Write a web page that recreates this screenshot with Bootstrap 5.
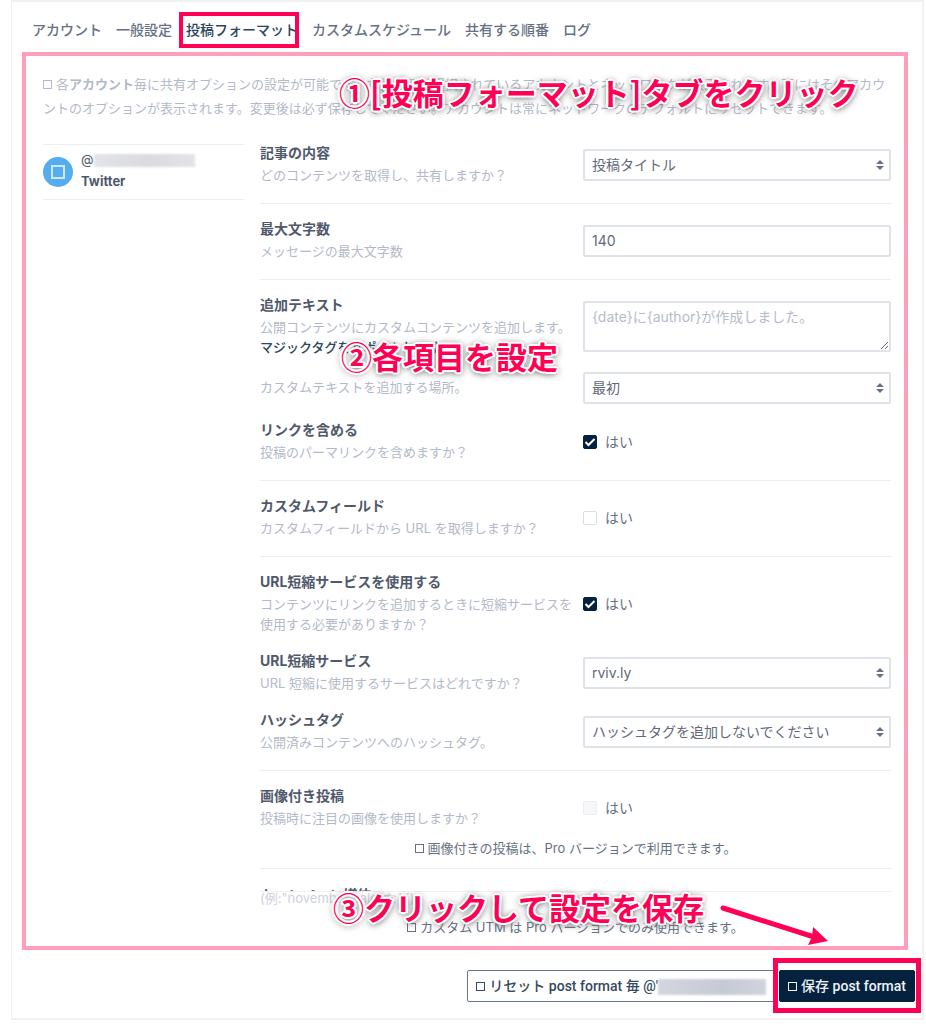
<!DOCTYPE html>
<html lang="ja">
<head>
<meta charset="utf-8">
<meta name="viewport" content="width=device-width, initial-scale=1">
<title>投稿フォーマット</title>
<link href="https://cdn.jsdelivr.net/npm/bootstrap@5.3.0/dist/css/bootstrap.min.css" rel="stylesheet">
<style>
:root{--ink:#50596c;--soft:#b3b9c9;--rule:#f0f1f3;--edge:#dfe2e9;--navy:#04213d;--pink:#ff0055}
body{font-family:Inter,"Noto Sans CJK JP",sans-serif;font-size:14px;line-height:20px;color:#667083;background:#fff}
.panel{margin:0 2px 0 11px;border:1px solid #f0f1f2;border-width:2px 2px 2px 1px}
.tabs{gap:14px;padding:12px 20px 5px}
.tabs a{position:relative;color:#667083;text-decoration:none;font-weight:500;line-height:31px;border-bottom:2px solid transparent;white-space:nowrap}
.tabs a.active{color:#2c4560;border-bottom-color:var(--navy)}
.tabs a.active::after{content:"";position:absolute;inset:-2px -1px -3px -7px;border:4px solid var(--pink)}
.region{margin:0 14px 0 10px;border:4px solid #ff9dba;padding:16px 13px 9px 17px}
.intro{font-size:13px;line-height:24px;color:var(--soft);margin-bottom:20px}
.sq{display:inline-block;width:9px;height:9px;border:1px solid currentColor;margin-right:4px}
.split{display:grid;grid-template-columns:201fr 631fr;gap:16px;align-items:start}
.account{margin-top:4px;border:solid #eeeff1;border-width:1px 0;padding:8px 0;gap:8px;font-size:13px;color:var(--ink)}
.avatar{width:30px;height:30px;border-radius:50%;background:#55acee}
.smudge{display:inline-block;background:linear-gradient(90deg,#e3e4e8,#d9dbe0 55%,#e3e4e8);height:13px;vertical-align:middle;filter:blur(1px)}
.setting{display:grid;grid-template-columns:315fr 308fr;gap:8px}
.setting + .setting{margin-top:13px}
.setting.tight{margin-top:5px}
.setting h2,.cut{font-size:14px;font-weight:700;line-height:25px;margin:0;color:var(--ink)}
.setting p{font-size:13px;line-height:20px;margin:0;padding-bottom:1px;color:var(--soft)}
.setting p a{color:#2c4560;text-decoration:none;font-weight:500}
.setting.tight p{padding-top:14px}
.field{padding-top:9px}
.field .form-control,.field .form-select{font-size:14px;line-height:20px;color:#5f697c;height:32px;padding:4px 7px 6px;border:2px solid var(--edge);border-radius:2px;background-color:#fff}
.field .form-control::placeholder{color:#b6bccb}
.field textarea.form-control{height:51px;min-height:51px}
.field .form-select{background-image:url("data:image/svg+xml,%3Csvg xmlns='http://www.w3.org/2000/svg' viewBox='0 0 4 5'%3E%3Cpath fill='%23667189' d='M2 0L0 2h4zm0 5L0 3h4z'/%3E%3C/svg%3E");background-size:8px 10px;background-position:right 5px center}
.tick{display:flex;align-items:center;gap:8px;padding-top:15px}
.tick.mid{padding-top:25px}
.tick label{line-height:20px}
.tick .form-check-input{width:14px;height:14px;margin:0;border:1px solid #d8dce5;border-radius:2px}
.tick .form-check-input:checked{background-color:var(--navy);border-color:var(--navy);background-image:url("data:image/svg+xml,%3Csvg xmlns='http://www.w3.org/2000/svg' viewBox='0 0 12 12'%3E%3Cpath fill='none' stroke='%23fff' stroke-width='2' d='M1.500 6L4.500 9L10.500 3'/%3E%3C/svg%3E")}
.tick .form-check-input:disabled{background-color:#f6f7f9;opacity:1;border-color:#eceef2}
.tick .form-check-input:disabled~.form-check-label{opacity:1}
.line{border:0;border-top:1px solid #eceef0;opacity:1;margin:17px 0 12px}
.pro{font-size:13px;text-align:center;margin:9px 0 0}
.pro + .line{margin-top:10px;margin-bottom:18px}
.cut{height:5px;overflow:hidden;line-height:20px;border-bottom:1px solid var(--rule)}
.cut span{display:block;margin-top:-2px}
.sample{font-size:13px;line-height:12px;color:#ced2dc;margin:0}
.callout{position:absolute;font-family:"Noto Sans CJK JP",sans-serif;font-weight:700;font-size:31px;line-height:36px;white-space:nowrap;color:var(--pink);z-index:2;
text-shadow:2px 0 #fff,-2px 0 #fff,0 2px #fff,0 -2px #fff,1px 1px #fff,-1px 1px #fff,1px -1px #fff,-1px -1px #fff,2px 1px #fff,-2px 1px #fff,2px -1px #fff,-2px -1px #fff,0 1px 6px #555,0 1px 8px #888}
.c-one{left:296px;top:2px}
.c-two{left:81px;top:46px}
.c-three{left:73px;bottom:12px}
.pointer{position:absolute;right:62px;bottom:-8px;width:110px;height:42px;z-index:3}
.actions{padding:20px 7px 16px;gap:4px}
.actions .btn{position:relative;font-family:Roboto,"Noto Sans CJK JP",sans-serif;font-size:14px;line-height:20px;padding:5px 8px;border-radius:2px;font-weight:500;white-space:nowrap}
.reset{border:1px solid #66788c;color:#344a62;background:#fff}
.reset .smudge{width:108px;height:16px;background:linear-gradient(90deg,#d3d6de,#c5cad5 60%,#d0d4dd)}
.save,.save:hover{background:var(--navy);border-color:var(--navy);color:#eef2f7}
.save::after{content:"";position:absolute;inset:-13px -7px -12px -7px;border:5px solid var(--pink)}
</style>
</head>
<body>
<main class="panel">
  <nav class="tabs d-flex">
    <a href="#">アカウント</a><a href="#">一般設定</a><a href="#" class="active" aria-current="page">投稿フォーマット</a><a href="#">カスタムスケジュール</a><a href="#">共有する順番</a><a href="#">ログ</a>
  </nav>
  <section class="region">
    <div class="position-relative">
      <p class="intro"><span class="sq"></span>各<b>アカウント</b>毎に共有オプションの設定が可能です。左側に現在選択されているアカウントとネットワークが表示されます。下にはそのアカウントのオプションが表示されます。変更後は必ず保存してください。アカウントは常にネットワークのデフォルトにリセットできます。</p>
      <div class="callout c-one">①[投稿フォーマット]タブをクリック</div>
    </div>
    <div class="split">
      <aside class="account d-flex align-items-center">
        <span class="avatar d-flex align-items-center justify-content-center flex-shrink-0"><svg width="14" height="14"><rect x="1" y="1" width="12" height="12" fill="none" stroke="#cfe7fb" stroke-width="2"/></svg></span>
        <div><div class="lh-1 text-nowrap">@<span class="smudge" style="width:101px"></span></div><b class="d-block pt-1">Twitter</b></div>
      </aside>
      <form class="position-relative" id="format">
        <div class="setting">
          <div><h2><label for="content">記事の内容</label></h2><p>どのコンテンツを取得し、共有しますか？</p></div>
          <div class="field"><select class="form-select" id="content"><option>投稿タイトル</option></select></div>
        </div>
        <hr class="line">
        <div class="setting">
          <div><h2><label for="max">最大文字数</label></h2><p>メッセージの最大文字数</p></div>
          <div class="field"><input class="form-control" id="max" type="text" value="140"></div>
        </div>
        <hr class="line">
        <div class="setting position-relative">
          <div><h2><label for="extra">追加テキスト</label></h2><p>公開コンテンツにカスタムコンテンツを追加します。<a href="#">マジックタグをサポートします。</a></p></div>
          <div class="field"><textarea class="form-control" id="extra" placeholder="{date}に{author}が作成しました。"></textarea></div>
          <div class="callout c-two">②各項目を設定</div>
        </div>
        <div class="setting tight">
          <p><label for="place">カスタムテキストを追加する場所。</label></p>
          <div class="field"><select class="form-select" id="place"><option>最初</option></select></div>
        </div>
        <div class="setting">
          <div><h2>リンクを含める</h2><p>投稿のパーマリンクを含めますか？</p></div>
          <div class="tick align-self-start"><input class="form-check-input" type="checkbox" id="link" checked><label for="link">はい</label></div>
        </div>
        <hr class="line">
        <div class="setting">
          <div><h2>カスタムフィールド</h2><p>カスタムフィールドから URL を取得しますか？</p></div>
          <div class="tick align-self-start"><input class="form-check-input" type="checkbox" id="custom"><label for="custom">はい</label></div>
        </div>
        <hr class="line">
        <div class="setting">
          <div><h2>URL短縮サービスを使用する</h2><p>コンテンツにリンクを追加するときに短縮サービスを使用する必要がありますか？</p></div>
          <div class="tick mid align-self-start"><input class="form-check-input" type="checkbox" id="short" checked><label for="short">はい</label></div>
        </div>
        <div class="setting">
          <div><h2><label for="service">URL短縮サービス</label></h2><p>URL 短縮に使用するサービスはどれですか？</p></div>
          <div class="field"><select class="form-select" id="service"><option>rviv.ly</option></select></div>
        </div>
        <div class="setting">
          <div><h2><label for="hash">ハッシュタグ</label></h2><p>公開済みコンテンツへのハッシュタグ。</p></div>
          <div class="field"><select class="form-select" id="hash"><option>ハッシュタグを追加しないでください</option></select></div>
        </div>
        <hr class="line">
        <div class="setting">
          <div><h2>画像付き投稿</h2><p>投稿時に注目の画像を使用しますか？</p></div>
          <div class="tick align-self-start"><input class="form-check-input" type="checkbox" id="image" disabled><label class="form-check-label" for="image">はい</label></div>
        </div>
        <p class="pro"><span class="sq"></span>画像付きの投稿は、Pro バージョンで利用できます。</p>
        <hr class="line">
        <div class="cut"><span>キャンペーン媒体</span></div>
        <p class="sample">(例:"november sale"など)</p>
        <p class="pro pt-1"><span class="sq"></span>カスタム UTM は Pro バージョンでのみ使用できます。</p>
        <div class="callout c-three">③クリックして設定を保存</div>
        <svg class="pointer" viewBox="0 0 110 42"><path d="M4 5L92 33" stroke="#ff0055" stroke-width="5" stroke-linecap="round" fill="none"/><path d="M94 24L109 38L89 42L93 34Z" fill="#ff0055"/></svg>
      </form>
    </div>
  </section>
  <div class="actions d-flex justify-content-end">
    <button type="button" class="btn reset"><span class="sq"></span>リセット post format 毎 @'<span class="smudge"></span></button>
    <button type="submit" form="format" class="btn save"><span class="sq"></span>保存 post format</button>
  </div>
</main>
<script src="https://cdn.jsdelivr.net/npm/bootstrap@5.3.0/dist/js/bootstrap.bundle.min.js"></script>
</body>
</html>
